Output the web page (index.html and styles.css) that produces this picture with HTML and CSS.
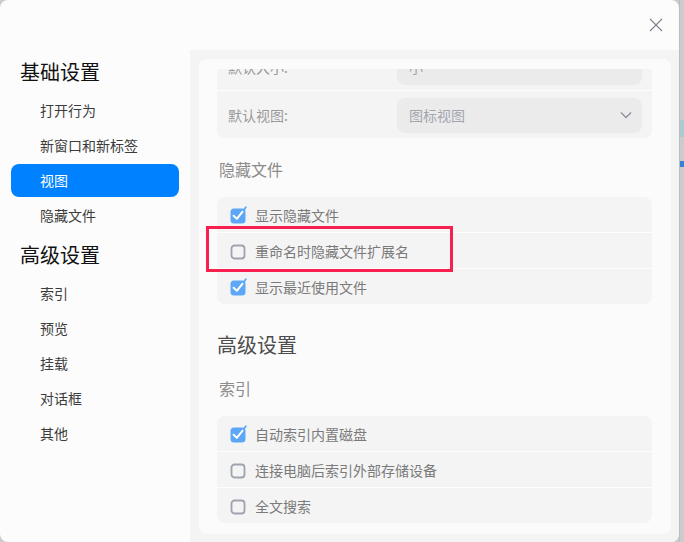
FILE: index.html
```html
<!DOCTYPE html>
<html lang="zh-CN">
<head>
    <meta charset="UTF-8">
    <title>设置</title>
    <link rel="stylesheet" href="styles.css">
</head>
<body>
    <div class="dialog">
        <div class="titlebar">
            <button class="close-btn" aria-label="关闭">
                <svg width="14" height="14" viewBox="0 0 14 14"><path d="M1 1L13 13M13 1L1 13" stroke="#7d828c" stroke-width="1.1" fill="none"/></svg>
            </button>
        </div>

        <div class="dialog-body">
            <!-- Navigation -->
            <nav class="sidebar">
                <div class="nav-group">基础设置</div>
                <a class="nav-item">打开行为</a>
                <a class="nav-item">新窗口和新标签</a>
                <a class="nav-item active">视图</a>
                <a class="nav-item">隐藏文件</a>
                <div class="nav-group">高级设置</div>
                <a class="nav-item">索引</a>
                <a class="nav-item">预览</a>
                <a class="nav-item">挂载</a>
                <a class="nav-item">对话框</a>
                <a class="nav-item">其他</a>
            </nav>

            <!-- Settings content -->
            <main class="panel">
                <div class="card">
                    <div class="scroll">
                        <div class="group group-view">
                            <div class="row row-form">
                                <span class="row-label">默认大小:</span>
                                <div class="select">小</div>
                            </div>
                            <div class="row row-form">
                                <span class="row-label">默认视图:</span>
                                <div class="select">
                                    图标视图
                                    <svg class="chevron" width="12" height="8" viewBox="0 0 12 8"><path d="M1 1.5L6 6.5L11 1.5" stroke="#8a8f9b" stroke-width="1.3" fill="none"/></svg>
                                </div>
                            </div>
                        </div>

                        <h3 class="sub-title">隐藏文件</h3>
                        <div class="group">
                            <label class="row row-check"><span class="check on"></span>显示隐藏文件</label>
                            <label class="row row-check"><span class="check"></span>重命名时隐藏文件扩展名</label>
                            <label class="row row-check"><span class="check on"></span>显示最近使用文件</label>
                        </div>

                        <h2 class="section-title">高级设置</h2>
                        <h3 class="sub-title sub-index">索引</h3>
                        <div class="group">
                            <label class="row row-check"><span class="check on"></span>自动索引内置磁盘</label>
                            <label class="row row-check"><span class="check"></span>连接电脑后索引外部存储设备</label>
                            <label class="row row-check"><span class="check"></span>全文搜索</label>
                        </div>
                    </div>
                    <div class="highlight"></div>
                </div>
            </main>
        </div>
    </div>

    <div class="backdrop">
        <div class="bg-tile"></div>
        <div class="bg-bar"></div>
    </div>

    <script>
        // draw the checkbox glyphs
        const checkSvg = '<svg width="18" height="18" viewBox="0 0 18 18">' +
            '<rect x="0.5" y="2.5" width="15" height="15" rx="3.5" fill="#5ca8f7"/>' +
            '<path d="M3.6 9.8L6.8 12.8L12.6 5.6" stroke="#fff" stroke-width="2" fill="none" stroke-linecap="round" stroke-linejoin="round"/>' +
            '<path d="M13.6 4.2L15.8 1.2" stroke="#5ca8f7" stroke-width="1.8" stroke-linecap="round"/>' +
            '</svg>';
        const emptySvg = '<svg width="18" height="18" viewBox="0 0 18 18">' +
            '<rect x="1.5" y="3.5" width="13" height="13" rx="3" fill="none" stroke="#9ea3ae" stroke-width="1.8"/>' +
            '</svg>';
        document.querySelectorAll('.check').forEach(el => {
            el.innerHTML = el.classList.contains('on') ? checkSvg : emptySvg;
        });
    </script>
</body>
</html>
```

FILE: styles.css
```css
* {
    margin: 0;
    padding: 0;
    box-sizing: border-box;
}

body {
    display: flex;
    height: 542px;
    overflow: hidden;
    background-color: #cbcbcb;
    font-family: "Noto Sans CJK SC", "Noto Sans", sans-serif;
}

/* Dialog */
.dialog {
    width: 679px;
    height: 542px;
    flex-shrink: 0;
    display: flex;
    flex-direction: column;
    background-color: #fcfcfc;
    border-radius: 8px;
    overflow: hidden;
}

.titlebar {
    height: 50px;
    display: flex;
    justify-content: flex-end;
    align-items: flex-start;
}

.close-btn {
    width: 30px;
    height: 30px;
    margin: 10px 8px 0 0;
    display: flex;
    align-items: center;
    justify-content: center;
    background: none;
    border: none;
}

.dialog-body {
    flex: 1;
    display: flex;
    min-height: 0;
}

/* Sidebar */
.sidebar {
    width: 190px;
    padding: 8px 11px 0;
    display: flex;
    flex-direction: column;
}

.nav-group {
    height: 28px;
    line-height: 28px;
    padding-left: 9px;
    margin: 7px 0 8px;
    font-size: 20px;
    color: #111;
}

.nav-group:first-child {
    margin-top: 0;
}

.nav-item {
    height: 33px;
    line-height: 33px;
    margin-bottom: 2px;
    padding-left: 29px;
    font-size: 14px;
    color: #3c3c3c;
    border-radius: 8px;
}

.nav-item.active {
    background-color: #0081ff;
    color: #fff;
}

/* Content panel */
.panel {
    flex: 1;
    padding: 9px 8px 8px 9px;
    background-color: #f4f4f4;
}

.card {
    position: relative;
    height: 100%;
    padding-top: 10px;
    background-color: #fbfbfb;
    border-radius: 8px;
}

.scroll {
    height: 100%;
    padding: 0 19px 0 18px;
    overflow: hidden;
}

.group {
    background-color: #f4f4f4;
    border-radius: 8px;
}

.group-view {
    margin-top: -26px;
    border-radius: 0 0 8px 8px;
}

.row {
    display: flex;
    align-items: center;
    border-bottom: 1px solid #fdfdfd;
    font-size: 14px;
}

.row:last-child {
    border-bottom: none;
}

.row-form {
    height: 48px;
    padding: 0 10px 0 11px;
}

.row-form:last-child {
    height: 47px;
}

.row-label {
    width: 169px;
    color: #9a9a9a;
}

.select {
    flex: 1;
    height: 34px;
    display: flex;
    align-items: center;
    justify-content: space-between;
    padding: 0 10px 0 12px;
    background-color: #ebebeb;
    border-radius: 8px;
    box-shadow: 0 1px 1px rgba(0, 0, 0, 0.04);
    color: #a2a6ae;
}

.row-check {
    height: 36px;
    padding-left: 13px;
    color: #7a7a7a;
}

.row-check:last-child {
    height: 35px;
}

.check {
    width: 18px;
    height: 18px;
    margin-right: 7px;
    display: flex;
}

.sub-title {
    margin: 20px 0 17px 2px;
    font-size: 16px;
    line-height: 22px;
    font-weight: normal;
    color: #8b8b8b;
}

.section-title {
    margin-top: 28px;
    font-size: 20px;
    line-height: 26px;
    font-weight: normal;
    color: #4d4d4d;
}

.sub-index {
    margin-top: 19px;
}

/* Red annotation frame */
.highlight {
    position: absolute;
    left: 7px;
    top: 167px;
    width: 247px;
    height: 46px;
    border: 3px solid #f8204f;
}

/* Window behind the dialog */
.backdrop {
    flex: 1;
    display: flex;
    flex-direction: column;
    border-left: 1px solid #bdbdbd;
}

.bg-tile {
    height: 17px;
    margin-top: 120px;
    background-color: #a9c9d4;
}

.bg-bar {
    height: 6px;
    margin-top: 24px;
    background-color: #2f84d8;
}
```
